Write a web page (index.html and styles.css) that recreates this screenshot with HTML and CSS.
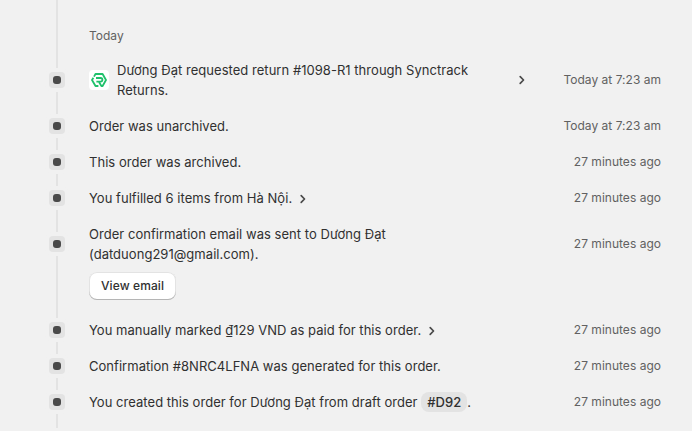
FILE: index.html
```html
<!DOCTYPE html>
<html lang="en">
<head>
    <meta charset="UTF-8">
    <meta name="viewport" content="width=device-width, initial-scale=1.0">
    <title>Order timeline</title>
    <link rel="stylesheet" href="styles.css">
</head>
<body>
    <svg class="defs">
        <symbol id="chevron" viewBox="0 0 8 10">
            <path d="M2.2 1.7 5.5 5 2.2 8.3" fill="none" stroke="#4a4a4a" stroke-width="1.7" stroke-linecap="round" stroke-linejoin="round"/>
        </symbol>
    </svg>

    <div class="timeline">
        <h2 class="day">Today</h2>

        <div class="event">
            <span class="dot"></span>
            <span class="app-icon">
                <svg width="16" height="14" viewBox="0 0 16 14" fill="none" stroke="#1fc16b" stroke-width="1.8" stroke-linejoin="round">
                    <path d="M3 3.6 4.5 1H11.6L15 7 11.6 13H10.4L8 9"/>
                    <path d="M5 5H9.6a1.7 1.7 0 0 1 0 3.6H5.4"/>
                    <path d="M2.4 4.8 1 7 4.5 13H7.4"/>
                </svg>
            </span>
            <p class="message with-app">Dương Đạt requested return #1098-R1 through Synctrack Returns.</p>
            <svg class="chevron end"><use href="#chevron"/></svg>
            <span class="time">Today at 7:23 am</span>
        </div>

        <div class="event">
            <span class="dot"></span>
            <p class="message">Order was unarchived.</p>
            <span class="time">Today at 7:23 am</span>
        </div>

        <div class="event">
            <span class="dot"></span>
            <p class="message">This order was archived.</p>
            <span class="time">27 minutes ago</span>
        </div>

        <div class="event">
            <span class="dot"></span>
            <p class="message">You fulfilled 6 items from Hà Nội.<svg class="chevron"><use href="#chevron"/></svg></p>
            <span class="time">27 minutes ago</span>
        </div>

        <div class="event">
            <span class="dot"></span>
            <p class="message">Order confirmation email was sent to Dương Đạt<br>(datduong291@gmail.com).</p>
            <span class="time">27 minutes ago</span>
        </div>
        <button class="btn">View email</button>

        <div class="event">
            <span class="dot"></span>
            <p class="message">You manually marked ₫129 VND as paid for this order.<svg class="chevron"><use href="#chevron"/></svg></p>
            <span class="time">27 minutes ago</span>
        </div>

        <div class="event">
            <span class="dot"></span>
            <p class="message">Confirmation #8NRC4LFNA was generated for this order.</p>
            <span class="time">27 minutes ago</span>
        </div>

        <div class="event">
            <span class="dot"></span>
            <p class="message">You created this order for Dương Đạt from draft order <span class="tag">#D92</span>.</p>
            <span class="time">27 minutes ago</span>
        </div>
    </div>
</body>
</html>
```
FILE: styles.css
```css
body {
    margin: 0;
    font-family: Inter, "Noto Sans", sans-serif;
    font-size: 13px;
    line-height: 20px;
    color: #303030;
    background-color: #f1f1f1;
}
.defs {
    display: none;
}
.timeline {
    position: relative;
    box-sizing: border-box;
    height: 428px;
    padding: 26px 31px 0 45px;
}
/* vertical line behind the dots */
.timeline::before {
    content: "";
    position: absolute;
    left: 56px;
    top: 0;
    bottom: 0;
    width: 2px;
    background-color: #e3e3e3;
}
.day {
    margin: 0 0 14px 44px;
    font-size: 12px;
    font-weight: 400;
    color: #616161;
}
.event {
    position: relative;
    display: flex;
    align-items: center;
    margin-bottom: 16px;
}
.dot {
    display: flex;
    align-items: center;
    justify-content: center;
    flex: none;
    width: 16px;
    height: 16px;
    margin: -2px 24px -2px 4px;
    border-radius: 4px;
    background-color: #e3e3e3;
    box-shadow: 0 0 0 4px #f1f1f1;
}
.dot::before {
    content: "";
    width: 8px;
    height: 8px;
    border-radius: 3px;
    background-color: #4a4a4a;
}
.app-icon {
    display: flex;
    align-items: center;
    justify-content: center;
    flex: none;
    width: 20px;
    height: 20px;
    margin-right: 8px;
    border-radius: 4px;
    background-color: #fff;
}
.message {
    margin: 0;
    letter-spacing: 0.035px;
}
.with-app {
    width: 380px;
}
.chevron {
    width: 8px;
    height: 10px;
    margin-left: 6.5px;
    vertical-align: -1px;
}
.chevron.end {
    margin-left: 20.5px;
}
.time {
    margin-left: auto;
    font-size: 12px;
    letter-spacing: 0.02px;
    color: #616161;
}
.btn {
    display: block;
    height: 28px;
    margin: -8px 0 20px 44px;
    padding: 0 12px;
    border: 0;
    border-radius: 8px;
    font: 500 12px/20px Inter, sans-serif;
    letter-spacing: 0.1px;
    color: #303030;
    background-color: #fff;
    box-shadow: inset 0 -1px 0 #b5b5b5, inset 0 0 0 1px #e3e3e3;
}
.tag {
    display: inline-block;
    padding: 0 6px;
    border-radius: 8px;
    font-weight: 500;
    background-color: #e3e3e3;
}
```
